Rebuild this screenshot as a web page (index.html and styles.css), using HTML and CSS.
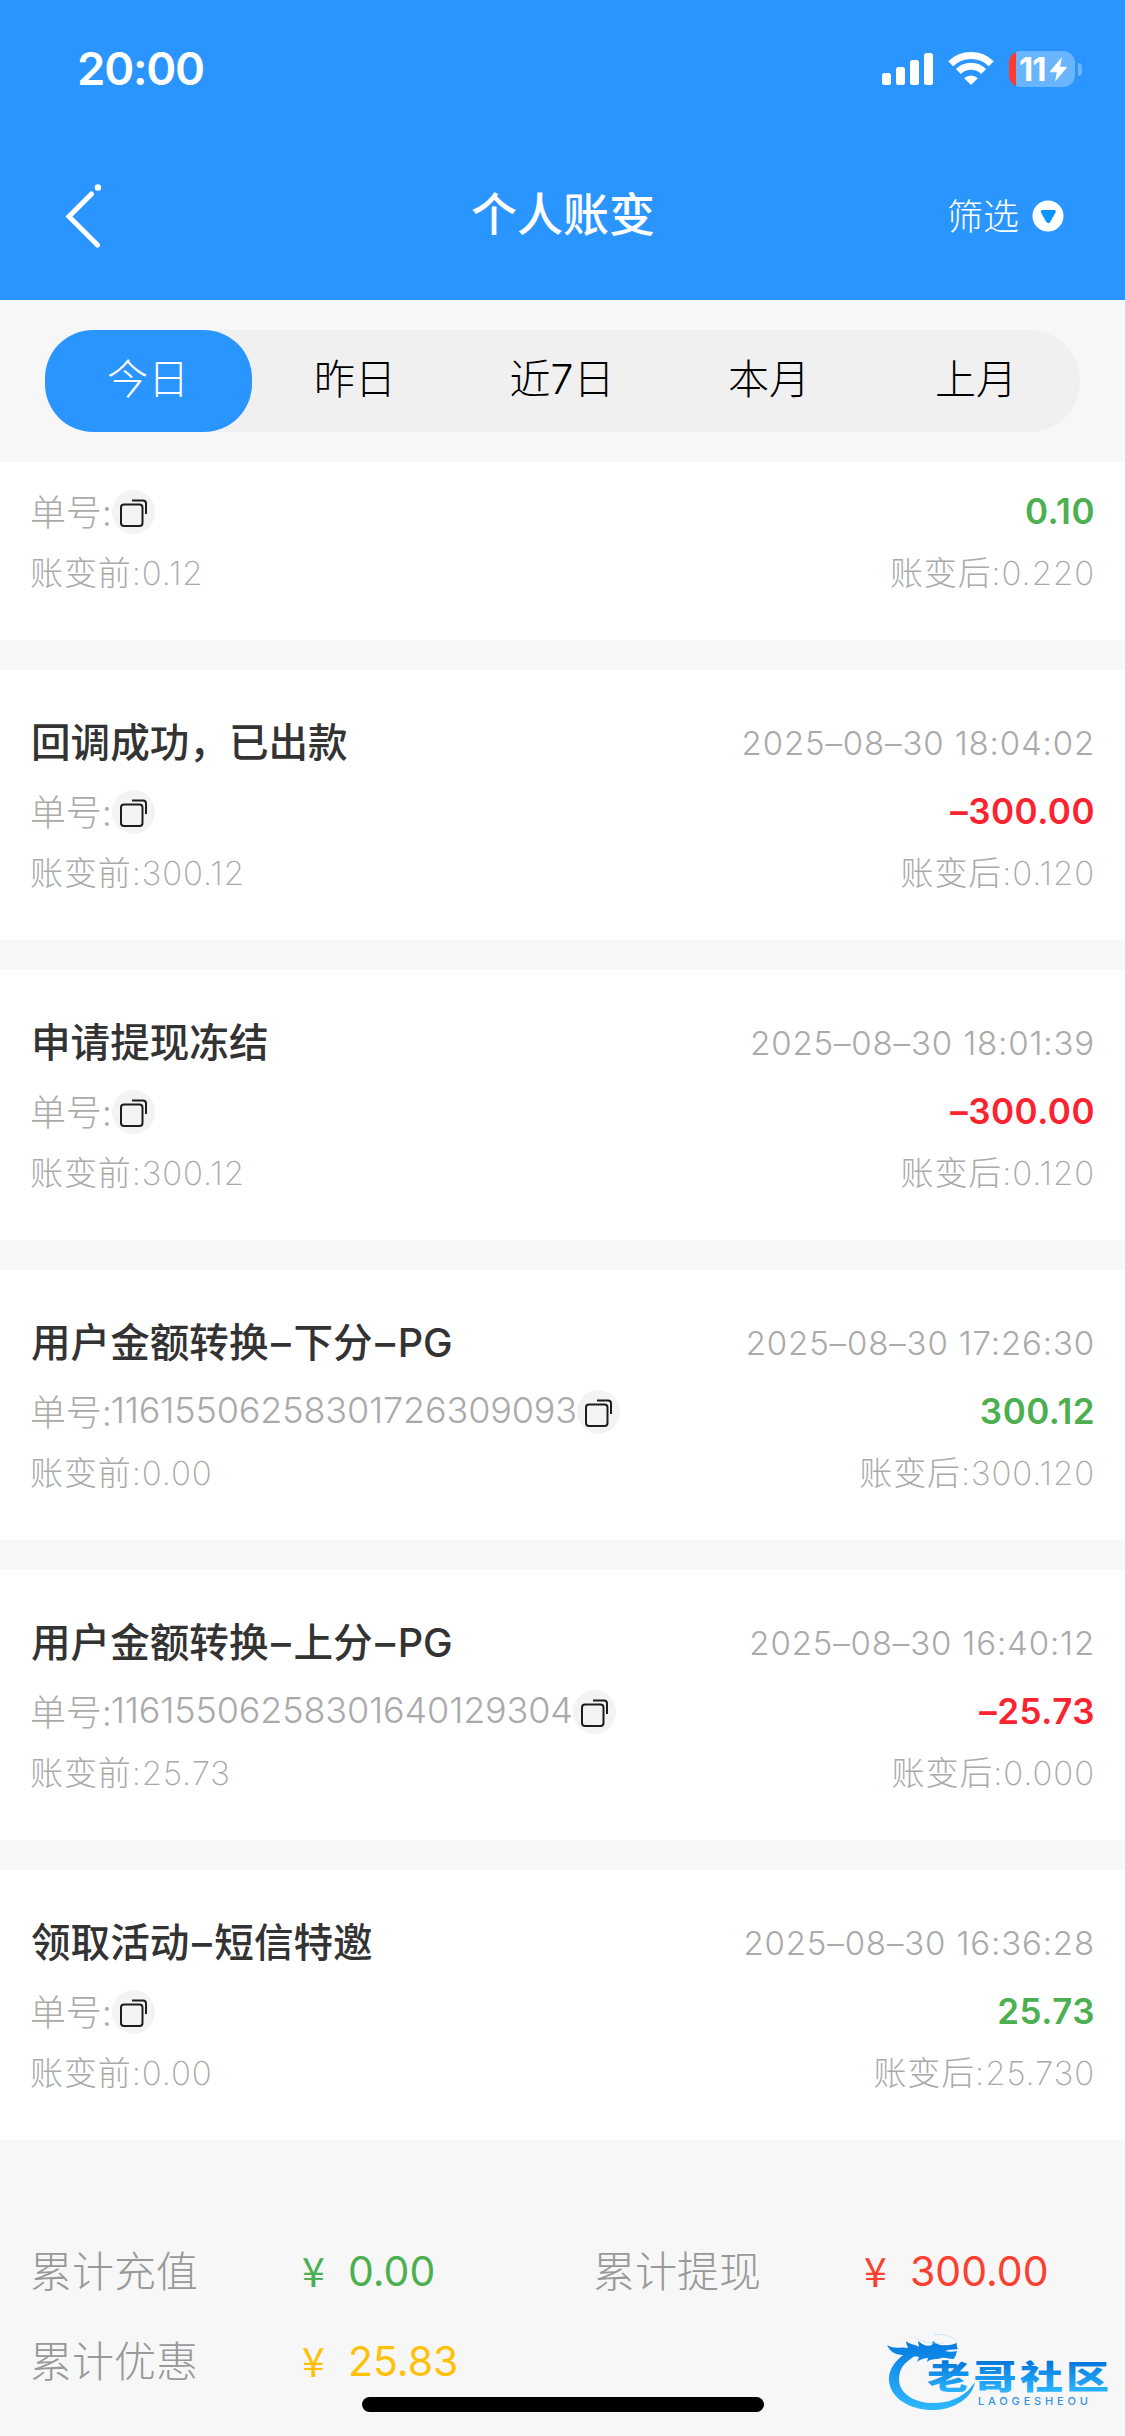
FILE: index.html
```html
<!DOCTYPE html>
<html lang="zh-CN">
<head>
<meta charset="utf-8">
<title>个人账变</title>
<link rel="stylesheet" href="styles.css">
</head>
<body>
<svg class="defs" width="0" height="0" aria-hidden="true">
  <symbol id="copy" viewBox="0 0 43 44">
    <rect x="9" y="14.5" width="21.5" height="21.5" rx="3" fill="none" stroke="#1c1c1c" stroke-width="2"/>
    <path d="M20 10.500h11a3 3 0 0 1 3 3V24" fill="none" stroke="#1c1c1c" stroke-width="2"/>
  </symbol>
</svg>
<div class="screen">
  <header class="header">
    <div class="status">
      <span class="clock">20:00</span>
      <div class="indicators">
        <svg class="signal" width="51" height="32" viewBox="0 0 51 32" fill="#fff">
          <rect x="0" y="20" width="9" height="12" rx="2.5"/><rect x="14" y="14" width="9" height="18" rx="2.5"/>
          <rect x="28" y="7" width="9" height="25" rx="2.5"/><rect x="42" y="0" width="9" height="32" rx="2.5"/>
        </svg>
        <svg class="wifi" width="46" height="34" viewBox="0 0 46 34">
          <path d="M2.7 11.8a29 29 0 0 1 40.6 0M10.4 19.5a18 18 0 0 1 25.2 0" fill="none" stroke="#fff" stroke-width="7"/>
          <path d="M16.2 26.2a9.7 9.7 0 0 1 13.6 0L23 33z" fill="#fff"/>
        </svg>
        <div class="battery">
          <span class="level">11</span>
          <svg width="17" height="25" viewBox="0 0 17 25"><path d="M12 0 0 14.3q-.5 1 .6 1h6.2L5 24.5 16.6 11q.6-1-.6-1.200H10z" fill="#fff"/></svg>
        </div>
        <span class="nub"></span>
      </div>
    </div>
    <nav class="navbar">
      <svg class="back" width="36" height="66" viewBox="0 0 36 66" fill="none" stroke="#fff" stroke-linecap="round">
        <path d="M26.500 12 4 34.500 32.500 63" stroke-width="5"/><circle cx="33" cy="5.500" r="3.300" fill="#fff" stroke="none"/>
      </svg>
      <h1 class="title">个人账变</h1>
      <div class="filter"><span>筛选</span>
        <svg width="32" height="32" viewBox="0 0 32 32"><circle cx="16" cy="16" r="15.500" fill="#fff"/><path d="M10.500 10h11.500q2.500 0 1.500 2.500l-5 9q-2 3.500-4.500 0l-5-9q-1-2.500 1.500-2.500z" fill="#0a94ff"/></svg>
      </div>
    </nav>
  </header>

  <div class="tabs-wrap">
    <div class="tabs">
      <span class="tab active">今日</span><span class="tab">昨日</span><span class="tab">近7日</span><span class="tab">本月</span><span class="tab">上月</span>
    </div>
  </div>

  <main class="list">
    <section class="card partial">
      <div class="row order"><span class="no">单号:<svg class="copy"><use href="#copy"/></svg></span><span class="amount in">0.10</span></div>
      <div class="row balance"><span>账变前:0.12</span><span>账变后:0.220</span></div>
    </section>
    <section class="card">
      <div class="row head"><h2 class="name">回调成功，已出款</h2><time class="time">2025–08–30 18:04:02</time></div>
      <div class="row order"><span class="no">单号:<svg class="copy"><use href="#copy"/></svg></span><span class="amount out">–300.00</span></div>
      <div class="row balance"><span>账变前:300.12</span><span>账变后:0.120</span></div>
    </section>
    <section class="card">
      <div class="row head"><h2 class="name">申请提现冻结</h2><time class="time">2025–08–30 18:01:39</time></div>
      <div class="row order"><span class="no">单号:<svg class="copy"><use href="#copy"/></svg></span><span class="amount out">–300.00</span></div>
      <div class="row balance"><span>账变前:300.12</span><span>账变后:0.120</span></div>
    </section>
    <section class="card">
      <div class="row head"><h2 class="name">用户金额转换<span class="dash">–</span>下分<span class="dash">–</span>PG</h2><time class="time">2025–08–30 17:26:30</time></div>
      <div class="row order"><span class="no">单号:<span class="digits">11615506258301726309093</span><svg class="copy"><use href="#copy"/></svg></span><span class="amount in">300.12</span></div>
      <div class="row balance"><span>账变前:0.00</span><span>账变后:300.120</span></div>
    </section>
    <section class="card">
      <div class="row head"><h2 class="name">用户金额转换<span class="dash">–</span>上分<span class="dash">–</span>PG</h2><time class="time">2025–08–30 16:40:12</time></div>
      <div class="row order"><span class="no">单号:<span class="digits">11615506258301640129304</span><svg class="copy"><use href="#copy"/></svg></span><span class="amount out">–25.73</span></div>
      <div class="row balance"><span>账变前:25.73</span><span>账变后:0.000</span></div>
    </section>
    <section class="card">
      <div class="row head"><h2 class="name">领取活动<span class="dash">–</span>短信特邀</h2><time class="time">2025–08–30 16:36:28</time></div>
      <div class="row order"><span class="no">单号:<svg class="copy"><use href="#copy"/></svg></span><span class="amount in">25.73</span></div>
      <div class="row balance"><span>账变前:0.00</span><span>账变后:25.730</span></div>
    </section>
  </main>

  <footer class="totals">
    <span class="label">累计充值</span><span class="sum green"><i class="yen">¥</i>0.00</span>
    <span class="label">累计提现</span><span class="sum red"><i class="yen">¥</i>300.00</span>
    <span class="label">累计优惠</span><span class="sum amber"><i class="yen">¥</i>25.83</span>
  </footer>

  <svg class="watermark" width="226" height="82" viewBox="0 0 226 82">
    <defs>
      <linearGradient id="ring" gradientUnits="userSpaceOnUse" x1="0" y1="8" x2="0" y2="78"><stop offset="0" stop-color="#0479df"/><stop offset="1" stop-color="#2fb8ff"/></linearGradient>
      <linearGradient id="word" gradientUnits="userSpaceOnUse" x1="0" y1="-36" x2="0" y2="3"><stop offset="0" stop-color="#0478dc"/><stop offset="1" stop-color="#2cb4fd"/></linearGradient>
    </defs>
    <path d="M36 15C14 20 2 35 3 49c2 19 24 30 46 29 20-1 37-12 40-28-8 13-22 20-38 21C31 72 13 63 13 47c0-13 9-20 24-27z" fill="url(#ring)"/>
    <path d="M1 13c8 5 14 1 21 3-1-3-2-5-2-7 4 4 9 3 13 6l-1-6c5 4 9 6 14 4l1-4c3 3 8 5 12 4 4 1 8-1 12-2-1 4 1 5 1 6-4 1-9 0-13 2 4 1 8 1 12 0-1 4-2 7-4 8-4 0-8-2-11-1-6 2-10 0-15 4l1-4c-4 0-7 1-11 4l2-5-11-2c-7 0-16 1-21-10z" fill="url(#ring)"/>
    <path d="M28 4c7 7 18 8 30 7M48 3c9-2 19 1 23 7" fill="none" stroke="#9fd5f7" stroke-width=".8" opacity=".6"/>
    <g transform="translate(0 57) scale(1 .76)">
      <text class="brand" fill="url(#word)"><tspan x="41">老</tspan><tspan x="87.500">哥</tspan><tspan x="134">社</tspan><tspan x="180">区</tspan></text>
    </g>
    <text class="brand-sub" x="92" y="73" textLength="110" fill="#2f93e2">LAOGESHEOU</text>
  </svg>
  <div class="home-indicator"></div>
</div>
</body>
</html>
```
FILE: styles.css
```css
* { box-sizing: border-box; margin: 0; }
body { font-family: Inter, "Noto Sans CJK SC", sans-serif; background: #f7f7f7; }
.defs { position: absolute; }
.screen { position: relative; width: 1125px; height: 2436px; overflow: hidden; background: #f7f7f7; }

.header { height: 300px; background: #2a95ff; color: #fff; }
.status { height: 132px; padding: 7px 43px 0 77px; display: flex; align-items: center; justify-content: space-between; }
.clock { font-size: 45.5px; font-weight: 600; line-height: 60px; letter-spacing: -1.2px; padding-bottom: 2px; }
.indicators { display: flex; align-items: center; padding-bottom: 1px; }
.wifi { margin-left: 15px; }
.battery { width: 66px; height: 36px; margin-left: 15px; border-radius: 12px; padding-left: 10px; display: flex; align-items: center; gap: 3px; background: linear-gradient(90deg, #ff3b30 7px, #6ab5ff 7px); }
.level { font-size: 33px; font-weight: 700; line-height: 36px; letter-spacing: -1px; width: 28px; }
.nub { width: 4px; height: 13px; margin-left: 3px; border-radius: 0 6px 6px 0; background: #6ab5ff; }
.navbar { height: 168px; padding: 0 61px 0 65px; display: grid; grid-template-columns: 260px 1fr 260px; align-items: center; }
.back { margin-bottom: 2px; }
.title { font-size: 46px; font-weight: 500; line-height: 60px; text-align: center; margin: -4px 0 0 -3px; }
.filter { display: flex; align-items: center; justify-content: flex-end; gap: 13px; font-size: 36px; line-height: 48px; font-weight: 300; }
.filter span { padding-top: 1px; }

.tabs-wrap { height: 162px; padding: 30px 45px; }
.tabs { height: 102px; display: grid; grid-template-columns: repeat(5, 1fr); border-radius: 51px; background: #f0f0f0; }
.tab { height: 102px; display: flex; align-items: center; justify-content: center; padding: 0 1px 10px 0; font-size: 41px; font-weight: 300; color: #000; border-radius: 48px; }
.tab.active { background: #2a95ff; color: #fff; font-weight: 250; }

.list { display: flex; flex-direction: column; gap: 30px; }
.card { height: 270px; padding: 43px 30px 0; background: #fff; }
.card.partial { height: 178px; padding-top: 11px; }
.row { display: flex; align-items: center; justify-content: space-between; color: #aaa; }
.head { height: 60px; }
.name { font-size: 39.6px; font-weight: 500; color: #333; padding: 0 0 7px 1px; }
.dash { display: inline-block; width: 25px; text-align: center; }
.time { font-size: 33px; font-weight: 300; letter-spacing: .85px; }
.order { height: 78px; padding-bottom: 2px; }
.no { display: flex; align-items: center; font-size: 36px; font-weight: 300; letter-spacing: -.15px; padding-bottom: 3px; }
.copy { width: 43px; height: 44px; margin: 4px 0 0 0; border-radius: 50%; background: #f3f3f3; }
.digits { padding-top: 1px; margin-left: -1px; }
.amount { font-size: 35px; font-weight: 570; letter-spacing: .5px; }
.in { color: #4caf50; }
.out { color: #fa232f; }
.balance { height: 46px; font-size: 33px; font-weight: 250; letter-spacing: .9px; padding-bottom: 7px; }

.totals { padding: 85px 30px 0; display: grid; grid-template-columns: 270px 293px 269px 1fr; grid-auto-rows: 90px; align-items: center; font-size: 42px; }
.label { color: #999; font-weight: 300; padding: 0 0 4px 0; }
.sum { display: flex; align-items: center; font-weight: 400; font-size: 41px; padding-top: 1px; }
.yen { width: 48px; padding: 0 0 4px 2px; font-style: normal; font-family: "Noto Sans CJK SC", sans-serif; line-height: 50px; }
.green { color: #4caf50; }
.red { color: #fc4030; }
.amber { color: #ffc107; }

.watermark { position: absolute; left: 886px; top: 2332px; }
.brand { font: 900 43px "Noto Sans CJK SC", sans-serif; }
.brand-sub { font: 500 11px Inter, sans-serif; }
.home-indicator { position: absolute; left: 362px; top: 2397px; width: 402px; height: 15px; border-radius: 8px; background: #000; }
```
